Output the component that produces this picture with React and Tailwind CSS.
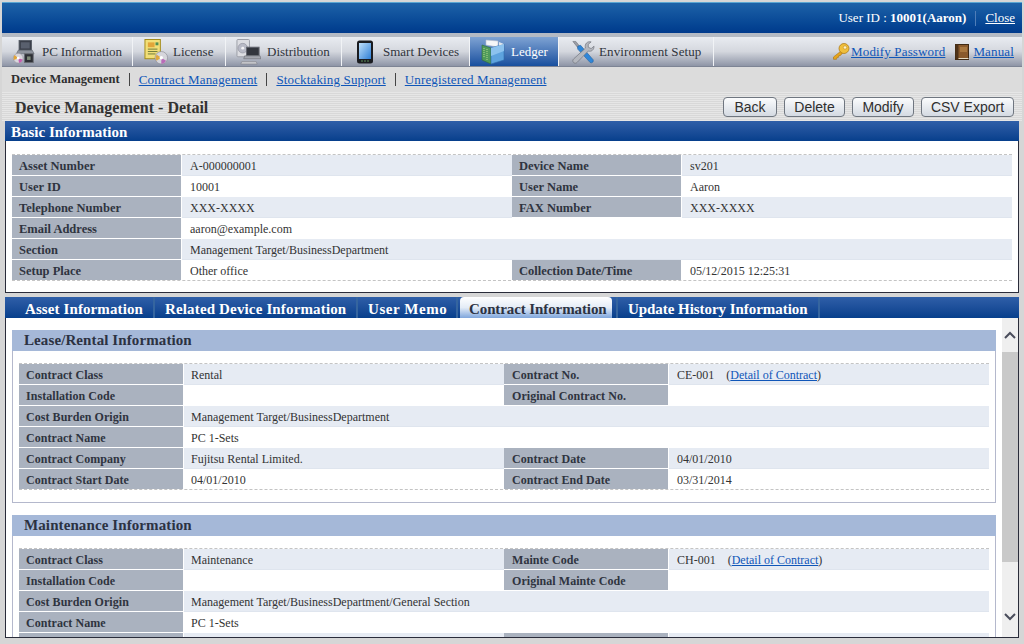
const serif = "font-['Liberation_Serif',serif]";

function PcIcon() {
  return (
    <svg width="26" height="28" viewBox="0 0 26 28">
      <rect x="8" y="1" width="14" height="11" fill="#3a3f4a" stroke="#555b66" />
      <rect x="10" y="3" width="10" height="7" fill="#59606e" />
      <path d="M7 12h16l2 4H5z" fill="#8d929c" stroke="#5a5f68" strokeWidth="0.6" />
      <circle cx="7" cy="21" r="5.5" fill="#d9d6dc" stroke="#8c8c96" strokeWidth="0.6" />
      <path d="M7 21L3 17.5A5.5 5.5 0 0 0 2 23z" fill="#e2a53a" />
      <path d="M7 21l5 1.5A5.5 5.5 0 0 1 8 26.5z" fill="#c75fb0" />
      <circle cx="7" cy="21" r="1.5" fill="#fff" />
      <rect x="14" y="16" width="10" height="10" fill="#2e3036" stroke="#6a6d74" />
      <rect x="17" y="19" width="4" height="4" fill="#7e8a78" />
    </svg>
  );
}

function LicenseIcon() {
  return (
    <svg width="26" height="28" viewBox="0 0 26 28">
      <rect x="1" y="1" width="16" height="20" fill="#f2df78" stroke="#a28a18" />
      <rect x="4" y="4" width="7" height="5" fill="#e2a53a" />
      <path d="M4 11h10M4 13.500h10M4 16h8" stroke="#6e7a3a" />
      <rect x="12" y="4" width="3" height="3" fill="#4f8f55" />
      <circle cx="18" cy="20" r="6.500" fill="#d6d6dc" stroke="#85858f" strokeWidth="0.6" />
      <path d="M18 20l-5-3.500A6.500 6.500 0 0 0 13 23z" fill="#dfa83f" />
      <path d="M18 20l5 3A6.500 6.500 0 0 1 18 26.500z" fill="#b96cb8" />
      <circle cx="18" cy="20" r="1.800" fill="#fff" />
    </svg>
  );
}

function DistributionIcon() {
  return (
    <svg width="26" height="28" viewBox="0 0 26 28">
      <rect x="1" y="1" width="13" height="18" rx="1" fill="#dcdde2" stroke="#9a9ca6" />
      <circle cx="7" cy="10" r="5" fill="#b8bac6" stroke="#8a8c98" strokeWidth="0.6" />
      <circle cx="7" cy="10" r="1.500" fill="#f4f4f6" />
      <rect x="11" y="9" width="13" height="9" fill="#33363e" stroke="#63666e" />
      <path d="M9 18h16l1 3H8z" fill="#a4a6ae" stroke="#686a72" strokeWidth="0.6" />
      <path d="M6 24h15l1 2.500H5z" fill="#c8c9ce" stroke="#7f8088" strokeWidth="0.6" />
    </svg>
  );
}

function PhoneIcon() {
  return (
    <svg width="18" height="24" viewBox="0 0 18 24">
      <rect x="1" y="0.500" width="16" height="23" rx="2.500" fill="#1b1c20" />
      <defs>
        <linearGradient id="phoneScreen" x1="0" y1="0" x2="1" y2="1">
          <stop offset="0" stopColor="#bfe0fa" />
          <stop offset="1" stopColor="#2f7fd6" />
        </linearGradient>
      </defs>
      <rect x="3" y="3" width="12" height="16" fill="url(#phoneScreen)" />
      <path d="M5 21h2M8 21h2M11 21h2" stroke="#5e8f5a" />
    </svg>
  );
}

function LedgerIcon() {
  return (
    <svg width="26" height="28" viewBox="0 0 26 28">
      <path d="M2 7l9 3v16l-9-4z" fill="#4f9a5b" stroke="#2f6b3a" strokeWidth="0.6" />
      <path d="M4 10v10M7 11v11" stroke="#b6d98a" strokeDasharray="1 1" />
      <path d="M6 2l12 1v6L6 7z" fill="#f4f6f8" stroke="#b8c0cc" strokeWidth="0.6" />
      <path d="M11 10l13-4v16l-13 4z" fill="#5ea3de" stroke="#2d6bad" strokeWidth="0.6" />
      <path d="M11 10l13-4v7L11 18z" fill="#8cc2ee" />
      <path d="M19 4l5 2-5 1.500z" fill="#dfe6ee" />
    </svg>
  );
}

function ToolsIcon() {
  return (
    <svg width="26" height="26" viewBox="0 0 26 26">
      <path d="M3 2l3 0 4 5-1.500 2z" fill="#9a9da6" stroke="#6c6f78" strokeWidth="0.6" />
      <path d="M8 7l3-1 13 15c1 2-1 4-3 3L8 10z" fill="#2f86d8" stroke="#1f5f9f" strokeWidth="0.6" />
      <path d="M16 9L4 20c-1.500 1.500-1.500 3 0 4.200 1.300.8 2.500.5 3.500-.5L19 12c3 1 6-1 6-5l-3 2.500-3-1.500 0-3 3-2.500c-4-1-7 2-6 6.500z" fill="#b4b7be" stroke="#6f727a" strokeWidth="0.7" />
    </svg>
  );
}

function KeyIcon() {
  return (
    <svg width="18" height="17" viewBox="0 0 18 17">
      <path d="M9 8L1.500 14v2.300h3L5 14.500l1.500-.2.300-1.600 1.700-.3L11 9.500z" fill="#e8a51c" stroke="#a8720e" strokeWidth="0.6" />
      <circle cx="12" cy="5.500" r="5" fill="#f0bf3c" stroke="#a8720e" strokeWidth="0.7" />
      <circle cx="13" cy="4.500" r="1.700" fill="#fff3c4" stroke="#b07c14" strokeWidth="0.5" />
    </svg>
  );
}

function BookIcon() {
  return (
    <svg width="14" height="16" viewBox="0 0 14 16">
      <rect x="0.500" y="0.500" width="13" height="15" fill="#8a5a2c" stroke="#3f2a14" />
      <rect x="0.500" y="0.500" width="3" height="15" fill="#4f3218" />
      <path d="M5 3h7v5H5z" fill="#a8773f" />
      <path d="M3.500 14.500h10" stroke="#e6dcc4" />
    </svg>
  );
}

const mainTabs = [
  { label: "PC Information", icon: <PcIcon />, width: "w-[131px]", iconBox: "w-[33px] pl-[10px]", gap: "pl-[7px] tracking-[-0.1px]" },
  { label: "License", icon: <LicenseIcon />, width: "w-[93px]", iconBox: "w-[36px] pl-[11px]", gap: "pl-[4px]" },
  { label: "Distribution", icon: <DistributionIcon />, width: "w-[116px]", iconBox: "w-[35px] pl-[10px]", gap: "pl-[6px]" },
  { label: "Smart Devices", icon: <PhoneIcon />, width: "w-[128px]", iconBox: "w-[37px] pl-[14px]", gap: "pl-[4px]" },
  { label: "Ledger", icon: <LedgerIcon />, width: "w-[89px]", iconBox: "w-[38px] pl-[10px]", gap: "pl-[3px]", active: true },
  { label: "Environment Setup", icon: <ToolsIcon />, width: "w-[155px]", iconBox: "w-[36px] pl-[11px]", gap: "pl-[4px] tracking-[0.1px]" },
];

const subNav = ["Contract Management", "Stocktaking Support", "Unregistered Management"];
const buttons = [
  { label: "Back", width: "w-[54px]" },
  { label: "Delete", width: "w-[61px]" },
  { label: "Modify", width: "w-[62px]" },
  { label: "CSV Export", width: "w-[93px]" },
];

const basicRows = [
  ["Asset Number", "A-000000001", "Device Name", "sv201"],
  ["User ID", "10001", "User Name", "Aaron"],
  ["Telephone Number", "XXX-XXXX", "FAX Number", "XXX-XXXX"],
  ["Email Address", "aaron@example.com"],
  ["Section", "Management Target/BusinessDepartment"],
  ["Setup Place", "Other office", "Collection Date/Time", "05/12/2015 12:25:31"],
];

const detailLink = (
  <span className="pl-[9px]">
    (<a href="#" className="text-[#0f56b8] underline">Detail of Contract</a>)
  </span>
);

const leaseRows = [
  ["Contract Class", "Rental", "Contract No.", <>CE-001 {detailLink}</>],
  ["Installation Code", "", "Original Contract No.", ""],
  ["Cost Burden Origin", "Management Target/BusinessDepartment"],
  ["Contract Name", "PC 1-Sets"],
  ["Contract Company", "Fujitsu Rental Limited.", "Contract Date", "04/01/2010"],
  ["Contract Start Date", "04/01/2010", "Contract End Date", "03/31/2014"],
];

const maintRows = [
  ["Contract Class", "Maintenance", "Mainte Code", <>CH-001 {detailLink}</>],
  ["Installation Code", "", "Original Mainte Code", ""],
  ["Cost Burden Origin", "Management Target/BusinessDepartment/General Section"],
  ["Contract Name", "PC 1-Sets"],
  ["", "", "", ""],
];

const tabs = [
  { label: "Asset Information", cls: "w-[143px] pl-[13px] tracking-[0.1px] border-r-2 border-[#35659f]" },
  { label: "Related Device Information", cls: "w-[203px] pl-[10px] tracking-[0.15px] border-r-2 border-[#35659f]" },
  { label: "User Memo", cls: "w-[100px] pl-[10px] tracking-[0.55px] border-r-2 border-[#35659f]" },
  { label: "Contract Information", cls: "w-[152px] ml-[2px] pl-[9px] tracking-[-0.1px] rounded-t-[4px] bg-gradient-to-b from-[#ffffff] via-[#e4ecf6] to-[#7fa6dc] text-[#2c3242]" },
  { label: "Update History Information", cls: "w-[204px] ml-[4px] pl-[10px] tracking-[-0.05px] border-x-2 border-[#35659f]" },
];

function InfoTable({ rows, cols, labelText, labelPad, valuePad, label2Pad, value2Pad }) {
  return (
    <div className={`grid ${cols} border-t border-b border-dashed border-[#c4c4c4]`}>
      {rows.map((row, i) => {
        const last = i === rows.length - 1;
        const height = last ? "h-[20px]" : "h-[21px] border-b";
        const stripe = i % 2 === 0 ? "bg-[#e6ebf3] border-[#dfe5ee]" : "bg-white border-white";
        const label = `${height} pt-[2px] bg-[#aab2bf] border-r border-white font-bold flex items-center text-[#2f3440] whitespace-nowrap ${labelText}`;
        const value = `${height} pt-[2px] flex items-center whitespace-pre ${stripe}`;
        if (row.length === 2) {
          return [
            <div key={`${i}a`} className={`${label} ${labelPad}`}>{row[0]}</div>,
            <div key={`${i}b`} className={`${value} ${valuePad} col-span-3`}>{row[1]}</div>,
          ];
        }
        return [
          <div key={`${i}a`} className={`${label} ${labelPad}`}>{row[0]}</div>,
          <div key={`${i}b`} className={`${value} ${valuePad}`}>{row[1]}</div>,
          <div key={`${i}c`} className={`${label} ${label2Pad}`}>{row[2]}</div>,
          <div key={`${i}d`} className={`${value} ${value2Pad}`}>{row[3]}</div>,
        ];
      })}
    </div>
  );
}

function Section({ title, rows, className }) {
  return (
    <div className={className}>
      <div className="h-[21px] bg-[#a5b8d8] flex items-center pl-[12px] text-[15px] tracking-[0.1px] font-bold text-[#2c3242]">{title}</div>
      <div className="border-x border-b border-[#b4b8cc] px-[6px] py-[12px]">
        <InfoTable
          rows={rows}
          cols="grid-cols-[165px_320px_165px_320px]"
          labelText="tracking-[0.05px]"
          labelPad="pl-[7px]"
          valuePad="pl-[7px]"
          label2Pad="pl-[8px]"
          value2Pad="pl-[8px]"
        />
      </div>
    </div>
  );
}

export default function App() {
  return (
    <div className={`w-[1024px] h-[644px] overflow-hidden bg-[#d6d6d6] p-[2px] text-[12px] text-[#333] ${serif}`}>
      <header className="h-[31px] border-t border-[#5aa6d2] bg-gradient-to-b from-[#1d62a8] to-[#003a8c] flex items-center justify-end pr-[7px] text-white text-[13px]">
        <span>User ID : <b>10001(Aaron)</b></span>
        <span className="w-px h-[15px] bg-[#4f7db8] mx-[9px]" />
        <a href="#" className="underline">Close</a>
      </header>

      <div className="h-[4px] bg-[#b4bac4]" />
      <nav className="h-[30px] flex border-b border-[#7d8494] bg-gradient-to-b from-[#e9ecf1] via-[#d4d7de] to-[#8e95a6]">
        {mainTabs.map((t) => (
          <div
            key={t.label}
            className={`${t.width} h-full flex items-center border-r border-[#f1f3f6] text-[13px] ${t.active ? "bg-gradient-to-b from-[#7fa3d3] to-[#174f9e] text-white" : "text-[#30343c]"}`}
          >
            <span className={`${t.iconBox} shrink-0 flex items-center justify-start`}>{t.icon}</span>
            <span className={`${t.gap} whitespace-nowrap`}>{t.label}</span>
          </div>
        ))}
        <div className="flex-1 flex items-center justify-end pr-[8px] text-[13px] tracking-[0.15px]">
          <KeyIcon />
          <a href="#" className="text-[#0f56b8] underline ml-[1px]">Modify Password</a>
          <span className="ml-[10px]"><BookIcon /></span>
          <a href="#" className="text-[#0f56b8] underline ml-[4px]">Manual</a>
        </div>
      </nav>

      <div className="h-[25px] flex items-center pl-[9px] text-[13px] tracking-[0.15px] bg-[#dcdcdc]">
        <b className="text-[#2f2f2f] text-[12.5px] tracking-normal">Device Management</b>
        {subNav.map((s) => (
          <span key={s} className="flex items-center">
            <span className="w-px h-[13px] bg-[#444] mx-[9px]" />
            <a href="#" className="text-[#0f56b8] underline">{s}</a>
          </span>
        ))}
      </div>

      <div className="h-[29px] flex items-center justify-between pl-[13px] pr-[8px] bg-[repeating-linear-gradient(0deg,#e6e6e6_0px,#e6e6e6_1px,#d8d8d8_1px,#d8d8d8_2px)]">
        <h1 className="text-[16px] font-bold text-[#333] pt-[3px]">Device Management - Detail</h1>
        <div className="flex gap-[7px] pt-[1px] font-['Liberation_Sans',sans-serif] text-[14px] text-[#2f2f2f]">
          {buttons.map((b) => (
            <button
              key={b.label}
              className={`${b.width} h-[20px] rounded-[4px] border border-[#6f7680] bg-gradient-to-b from-[#fbfcfd] to-[#d4dae2] flex items-center justify-center`}
            >
              {b.label}
            </button>
          ))}
        </div>
      </div>

      <section className="mx-[3px] w-[1014px]">
        <div className="h-[20px] bg-gradient-to-b from-[#2f5fa8] to-[#063f8c] flex items-center pl-[6px] pt-[2px] text-[15px] font-bold text-white">
          Basic Information
        </div>
        <div className="h-[152px] bg-white border-x border-b border-[#2a2c3a] px-[6px] pt-[13px]">
          <InfoTable
            rows={basicRows}
            cols="grid-cols-[170px_330px_170px_330px]"
            labelText="text-[12.5px]"
            labelPad="pl-[7px]"
            valuePad="pl-[8px]"
            label2Pad="pl-[7px]"
            value2Pad="pl-[8px]"
          />
        </div>
      </section>

      <section className="mx-[3px] w-[1014px] mt-[4px]">
        <div className="h-[21px] bg-gradient-to-b from-[#2f5fa8] to-[#063f8c] flex items-end text-[15px] font-bold text-white">
          <div className="w-[7px]" />
          {tabs.map((t) => (
            <div key={t.label} className={`${t.cls} flex items-center h-[21px] pt-[4px] whitespace-nowrap`}>
              {t.label}
            </div>
          ))}
        </div>
        <div className="h-[320px] bg-white border-x border-b border-[#2a2c3a] flex overflow-hidden">
          <div className="flex-1 min-w-0 pl-[6px] pr-[6px] pt-[12px]">
            <Section title="Lease/Rental Information" rows={leaseRows} />
            <Section title="Maintenance Information" rows={maintRows} className="mt-[12px]" />
          </div>
          <div className="w-[16px] shrink-0 bg-[#efefef] flex flex-col items-center">
            <div className="h-[34px] w-full flex items-center justify-center">
              <svg width="12" height="8" viewBox="0 0 12 8"><path d="M1 7l5-5 5 5" fill="none" stroke="#4a4d5c" strokeWidth="2" /></svg>
            </div>
            <div className="h-[210px] w-full bg-[#c9c9c9]" />
            <div className="flex-1 w-full flex items-end justify-center pb-[16px]">
              <svg width="12" height="8" viewBox="0 0 12 8"><path d="M1 1l5 5 5-5" fill="none" stroke="#4a4d5c" strokeWidth="2" /></svg>
            </div>
          </div>
        </div>
      </section>
    </div>
  );
}
